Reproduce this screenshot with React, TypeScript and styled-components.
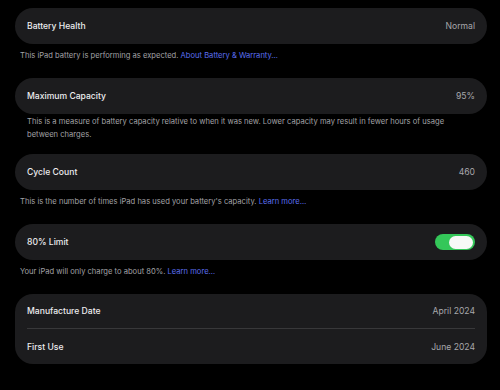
import React from "react"
import styled, { createGlobalStyle } from "styled-components"

const GlobalStyle = createGlobalStyle`
  html, body {
    margin: 0;
    padding: 0;
    background: #000;
  }
  body {
    font-family: Inter, "Liberation Sans", sans-serif;
    -webkit-font-smoothing: antialiased;
  }
`

const Page = styled.div`
  width: 500px;
  height: 390px;
  background: #000;
  padding: 8px 13px 0 15px;
  box-sizing: border-box;
  display: flex;
  flex-direction: column;
`

const Group = styled.div`
  background: #1c1c1e;
  border-radius: 18px;
  padding: 0 12px;
  display: flex;
  flex-direction: column;
`

const Row = styled.div<{ $dense?: boolean; $divider?: boolean }>`
  box-sizing: border-box;
  height: ${p => (p.$dense ? 35 : 36)}px;
  display: flex;
  align-items: center;
  justify-content: space-between;
  border-bottom: ${p => (p.$divider ? "1px solid #38383a" : "none")};
`

const Title = styled.span`
  color: #ececee;
  font-size: 8.6px;
  font-weight: 500;
`

const Value = styled.span`
  color: #a7a7ab;
  font-size: 8.6px;
`

const Note = styled.p<{ $indent?: boolean }>`
  margin: 0;
  padding: ${p => (p.$indent ? "1px 28px 13px 12px" : "5px 10px 16px 5px")};
  color: #a2a2a6;
  font-size: 7.6px;
  line-height: 13px;
`

const Link = styled.span`
  color: #5b6ff0;
`

const Toggle = styled.div`
  width: 40px;
  height: 16px;
  border-radius: 8px;
  background: #34c759;
  position: relative;
`

const Knob = styled.div`
  position: absolute;
  right: 2px;
  top: 1.5px;
  width: 24px;
  height: 13px;
  border-radius: 7px;
  background: #f7f9f7;
`

const App: React.FC = () => (
  <>
    <GlobalStyle />
    <Page>
      <Group>
        <Row>
          <Title>Battery Health</Title>
          <Value>Normal</Value>
        </Row>
      </Group>
      <Note>
        This iPad battery is performing as expected. <Link>About Battery &amp; Warranty…</Link>
      </Note>

      <Group>
        <Row>
          <Title>Maximum Capacity</Title>
          <Value>95%</Value>
        </Row>
      </Group>
      <Note $indent>
        This is a measure of battery capacity relative to when it was new. Lower capacity may result in fewer hours of usage between charges.
      </Note>

      <Group>
        <Row>
          <Title>Cycle Count</Title>
          <Value>460</Value>
        </Row>
      </Group>
      <Note>
        This is the number of times iPad has used your battery's capacity. <Link>Learn more…</Link>
      </Note>

      <Group>
        <Row>
          <Title>80% Limit</Title>
          <Toggle>
            <Knob />
          </Toggle>
        </Row>
      </Group>
      <Note>
        Your iPad will only charge to about 80%. <Link>Learn more…</Link>
      </Note>

      <Group>
        <Row $dense $divider>
          <Title>Manufacture Date</Title>
          <Value>April 2024</Value>
        </Row>
        <Row $dense>
          <Title>First Use</Title>
          <Value>June 2024</Value>
        </Row>
      </Group>
    </Page>
  </>
)

export default App
